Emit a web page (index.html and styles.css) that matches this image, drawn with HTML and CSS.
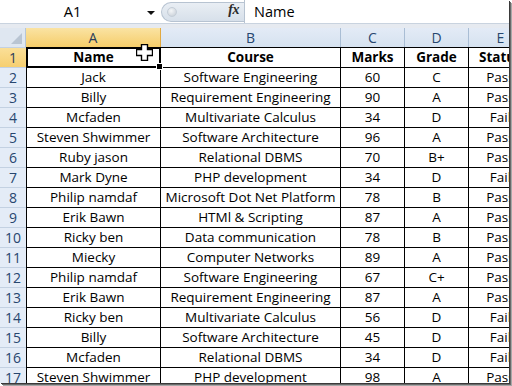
FILE: index.html
```html
<!DOCTYPE html>
<html>
<head>
<meta charset="utf-8">
<link rel="stylesheet" href="styles.css">
</head>
<body>
<div class="window">
  <div class="fbar">
    <div class="namebox"><span class="ref">A1</span><span class="arrow"></span></div>
    <div class="pill"><span class="knob"></span><span class="fx">fx</span></div>
    <div class="finput">Name</div>
  </div>
  <div class="strip"></div>
  <div class="sheet">
    <div class="corner"><span class="tri"></span></div>
    <div class="ch ch-sel">A</div>
    <div class="ch">B</div>
    <div class="ch">C</div>
    <div class="ch">D</div>
    <div class="ch">E</div>

    <div class="rh rh-sel r1">1</div>
    <div class="c ca r1 b sel">Name<span class="handle"></span></div>
    <div class="c r1 b">Course</div>
    <div class="c r1 b">Marks</div>
    <div class="c r1 b">Grade</div>
    <div class="c r1 b">Status</div>

    <div class="rh">2</div><div class="c ca">Jack</div><div class="c">Software Engineering</div><div class="c">60</div><div class="c">C</div><div class="c">Pass</div>
    <div class="rh">3</div><div class="c ca">Billy</div><div class="c">Requirement Engineering</div><div class="c">90</div><div class="c">A</div><div class="c">Pass</div>
    <div class="rh">4</div><div class="c ca">Mcfaden</div><div class="c">Multivariate Calculus</div><div class="c">34</div><div class="c">D</div><div class="c">Fail</div>
    <div class="rh">5</div><div class="c ca">Steven Shwimmer</div><div class="c">Software Architecture</div><div class="c">96</div><div class="c">A</div><div class="c">Pass</div>
    <div class="rh">6</div><div class="c ca">Ruby jason</div><div class="c">Relational DBMS</div><div class="c">70</div><div class="c">B+</div><div class="c">Pass</div>
    <div class="rh">7</div><div class="c ca">Mark Dyne</div><div class="c">PHP development</div><div class="c">34</div><div class="c">D</div><div class="c">Fail</div>
    <div class="rh">8</div><div class="c ca">Philip namdaf</div><div class="c">Microsoft Dot Net Platform</div><div class="c">78</div><div class="c">B</div><div class="c">Pass</div>
    <div class="rh">9</div><div class="c ca">Erik Bawn</div><div class="c">HTMl &amp; Scripting</div><div class="c">87</div><div class="c">A</div><div class="c">Pass</div>
    <div class="rh">10</div><div class="c ca">Ricky ben</div><div class="c">Data communication</div><div class="c">78</div><div class="c">B</div><div class="c">Pass</div>
    <div class="rh">11</div><div class="c ca">Miecky</div><div class="c">Computer Networks</div><div class="c">89</div><div class="c">A</div><div class="c">Pass</div>
    <div class="rh">12</div><div class="c ca">Philip namdaf</div><div class="c">Software Engineering</div><div class="c">67</div><div class="c">C+</div><div class="c">Pass</div>
    <div class="rh">13</div><div class="c ca">Erik Bawn</div><div class="c">Requirement Engineering</div><div class="c">87</div><div class="c">A</div><div class="c">Pass</div>
    <div class="rh">14</div><div class="c ca">Ricky ben</div><div class="c">Multivariate Calculus</div><div class="c">56</div><div class="c">D</div><div class="c">Fail</div>
    <div class="rh">15</div><div class="c ca">Billy</div><div class="c">Software Architecture</div><div class="c">45</div><div class="c">D</div><div class="c">Fail</div>
    <div class="rh">16</div><div class="c ca">Mcfaden</div><div class="c">Relational DBMS</div><div class="c">34</div><div class="c">D</div><div class="c">Fail</div>
    <div class="rh">17</div><div class="c ca">Steven Shwimmer</div><div class="c">PHP development</div><div class="c">98</div><div class="c">A</div><div class="c">Pass</div>
  </div>
  <svg class="cursor" width="17" height="17" viewBox="0 0 17 17"><path d="M5.5 0.5h6v5h5v6h-5v5h-6v-5h-5v-6h5z" fill="#fff" stroke="#000" stroke-width="1.4"/></svg>
</div>
</body>
</html>
```

FILE: styles.css
```css
html, body { margin: 0; padding: 0; background: #fff; }
body { width: 512px; height: 386px; overflow: hidden; }
.window {
  position: relative;
  width: 509px;
  height: 383px;
  overflow: hidden;
  background: #fff;
  box-shadow: 1px 1px 0 #3a3a3a, 2px 2px 0 #6a6a6a, 3px 3px 0 #a8a8a8;
  font-family: "Open Sans", "Noto Sans", sans-serif;
}
.fbar {
  display: flex;
  height: 24px;
  background: #fff;
  border-bottom: 1px solid #c9d3df;
  box-sizing: border-box;
}
.namebox {
  width: 159px;
  position: relative;
  display: flex;
  align-items: center;
  justify-content: center;
  font-size: 14.5px;
  color: #000;
  box-sizing: border-box;
}
.ref { margin-left: -14px; }
.arrow {
  position: absolute;
  left: 147px;
  top: 11px;
  width: 0; height: 0;
  border-left: 4px solid transparent;
  border-right: 4px solid transparent;
  border-top: 4px solid #111;
}
.pill {
  width: 83px;
  margin-top: 2px;
  height: 20px;
  box-sizing: border-box;
  background: linear-gradient(#e9eef4, #d7e0ea);
  border: 1px solid #b7c3d1;
  border-right: none;
  border-radius: 11px 0 0 11px;
  position: relative;
  margin-left: 2px;
}
.knob {
  position: absolute;
  left: 5px;
  top: 4px;
  width: 10px;
  height: 10px;
  border-radius: 50%;
  background: radial-gradient(circle at 40% 35%, #f4f6f8, #c3cbd4);
  border: 1px solid #c5ced8;
  box-sizing: border-box;
}
.fx {
  position: absolute;
  right: 5px;
  top: -1px;
  font-family: "Liberation Serif", serif;
  font-style: italic;
  font-weight: bold;
  font-size: 14px;
  color: #2b2b2b;
  letter-spacing: -0.5px;
}
.finput {
  flex: 1;
  border-left: 1px solid #b7c3d1;
  padding-left: 9px;
  font-size: 14.5px;
  line-height: 23px;
  color: #000;
}
.strip { height: 4px; background: #e6eaf0; }
.sheet {
  display: grid;
  grid-template-columns: 26px 135px 180px 64px 64px 64px;
  grid-template-rows: 19px 21px;
  grid-auto-rows: 20px;
  width: 533px;
}
.sheet > div { box-sizing: border-box; font-size: 13.5px; white-space: nowrap; overflow: hidden; }
.corner {
  background: #dfe7f1;
  border-right: 1px solid #b6c6d8;
  position: relative;
}
.tri {
  position: absolute;
  right: 3px;
  bottom: 3px;
  width: 0; height: 0;
  border-left: 11px solid transparent;
  border-bottom: 11px solid #b9c5d3;
}
.sheet > .ch {
  background: linear-gradient(#e3ebf6, #d6e2f0);
  border-right: 1px solid #a9bdd4;
  color: #27466f;
  text-align: center;
  line-height: 19px;
  font-size: 14px;
}
.sheet > .ch-sel {
  background: linear-gradient(#fae3a3, #f6cd6a);
  border-right: 1px solid #e2a940;
  color: #2b3e5a;
}
.sheet > .rh {
  background: #e4ecf7;
  border-bottom: 1px solid #c3d1e2;
  color: #27466f;
  text-align: center;
  line-height: 19px;
  font-size: 14px;
}
.sheet > .rh.r1 { border-top: 1px solid #c3d1e2; }
.sheet > .rh-sel { background: linear-gradient(#fadf98, #f6cf70); color: #2b3e5a; }
.c {
  border-right: 1px solid #000;
  border-bottom: 1px solid #000;
  color: #000;
  text-align: center;
  line-height: 19px;
}
.c.r1 { border-top: 1px solid #000; }
.ca { border-left: 1px solid #000; }
.b { font-weight: bold; }
.sheet > .sel { position: relative; overflow: visible; }
.sel::after {
  content: "";
  position: absolute;
  left: -1px; top: -1px; right: -1px; bottom: -1px;
  border: 2px solid #000;
}
.handle {
  position: absolute;
  right: -3px;
  bottom: -3px;
  width: 5px;
  height: 5px;
  background: #000;
  border: 1px solid #fff;
  z-index: 2;
}
.cursor { position: absolute; left: 136px; top: 44px; }
```
